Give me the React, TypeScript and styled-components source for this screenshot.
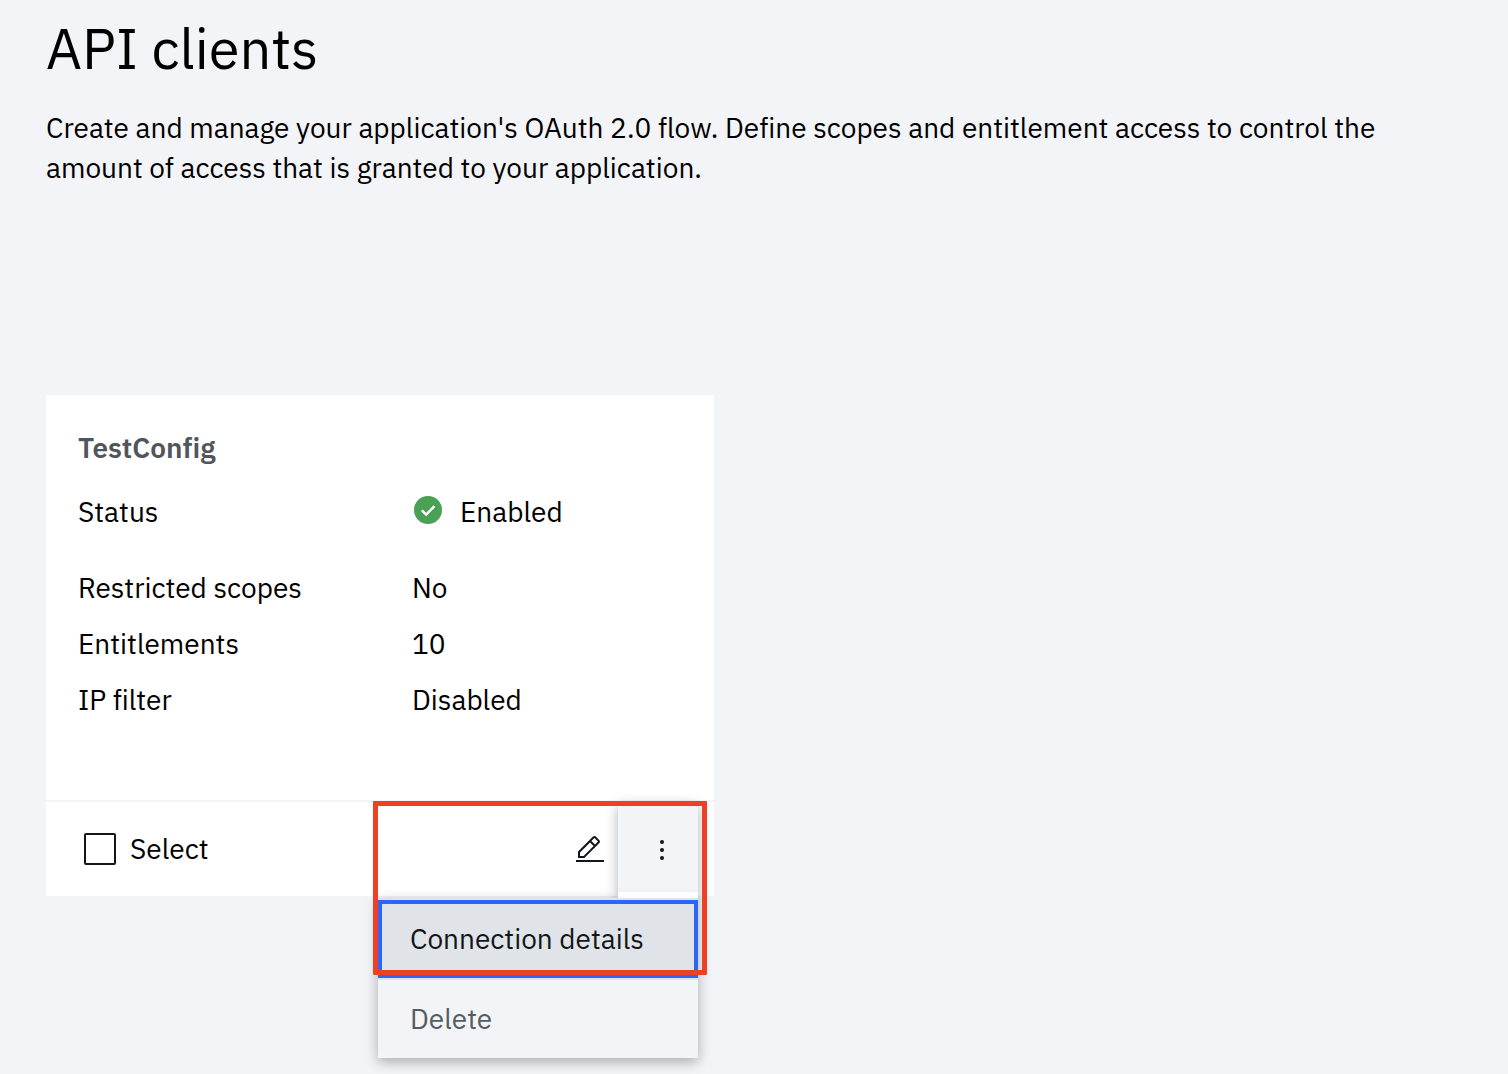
import React, { useState } from "react";
import styled, { createGlobalStyle } from "styled-components";

const color = {
  page: "#f2f4f8",
  card: "#ffffff",
  text: "#000000",
  ink: "#121619",
  heading: "#50565b",
  disabled: "#565c60",
  focus: "#2b66f6",
  selected: "#e0e3e8",
  green: "#4aa054",
  callout: "#ee4025",
};

const GlobalStyle = createGlobalStyle`
  *, *::before, *::after { box-sizing: border-box; }
  body {
    margin: 0;
    background: ${color.page};
    color: ${color.text};
    font-family: "IBM Plex Sans", Inter, "Liberation Sans", sans-serif;
    font-size: 28px;
    line-height: 40px;
    font-variant-ligatures: none;
  }
  button, input { font: inherit; color: inherit; }
`;

const Page = styled.main`
  min-height: 100vh;
  padding: 16px 46px;
`;

const Title = styled.h1`
  margin: 0;
  font-size: 56px;
  line-height: 64px;
  font-weight: 400;
`;

const Intro = styled.p`
  margin: 28px 0 0;
`;

const CardGrid = styled.section`
  display: grid;
  grid-template-columns: repeat(2, minmax(0, 1fr));
  column-gap: 80px;
  padding-top: 207px;
`;

const Card = styled.article`
  background: ${color.card};
`;

const CardBody = styled.div`
  padding: 33px 32px 72px;
`;

const CardTitle = styled.h2`
  margin: 0;
  font-size: 28px;
  line-height: 40px;
  font-weight: 600;
  color: ${color.heading};
`;

const Details = styled.dl`
  margin: 16px 0 0;
`;

const DetailRow = styled.div<{ $spaced?: boolean }>`
  display: grid;
  grid-template-columns: 334px minmax(0, 1fr);
  align-items: center;
  height: 56px;
  margin-bottom: ${(p) => (p.$spaced ? 20 : 0)}px;
`;

const Term = styled.dt`
  margin: 0;
`;

const Value = styled.dd`
  display: flex;
  align-items: center;
  gap: 18px;
  margin: 0;
`;

const StatusIcon = styled.svg`
  width: 28px;
  height: 28px;
  margin: 0 0 4px 2px;
`;

const CardFooter = styled.footer`
  display: flex;
  align-items: center;
  height: 96px;
  padding: 0 16px 0 38px;
  border-top: 2px solid ${color.page};
`;

const SelectLabel = styled.label`
  display: flex;
  align-items: center;
  gap: 14px;
  margin-right: auto;
`;

const Checkbox = styled.input`
  appearance: none;
  width: 32px;
  height: 32px;
  margin: 0;
  border: 2px solid ${color.ink};
  border-radius: 2px;
  &:checked { background: ${color.ink}; }
`;

const IconButton = styled.button`
  display: flex;
  align-items: center;
  justify-content: center;
  align-self: flex-start;
  width: 56px;
  height: 96px;
  padding: 0;
  border: 0;
  background: transparent;
  color: ${color.ink};
`;

const Overflow = styled.div`
  position: relative;
  align-self: flex-start;
`;

const OverflowButton = styled(IconButton)`
  width: 80px;
  padding-left: 8px;
  background: ${color.page};
  box-shadow: 0 4px 12px rgba(0, 0, 0, 0.3);
`;

const Icon = styled.svg`
  width: 32px;
  height: 32px;
  fill: currentColor;
`;

const Menu = styled.ul`
  position: absolute;
  top: 96px;
  right: 0;
  width: 320px;
  margin: 0;
  padding: 0;
  list-style: none;
  background: ${color.page};
  box-shadow: 0 4px 12px rgba(0, 0, 0, 0.3);

  &::before {
    content: "";
    position: absolute;
    bottom: 100%;
    right: 0;
    width: 80px;
    height: 6px;
    background: ${color.card};
  }
`;

const MenuItem = styled.li`
  border-top: 2px solid ${color.selected};
`;

const MenuButton = styled.button<{ $active?: boolean }>`
  display: block;
  width: 100%;
  height: 78px;
  padding: 0 32px;
  border: 0;
  text-align: left;
  white-space: nowrap;
  background: ${(p) => (p.$active ? color.selected : "transparent")};
  color: ${(p) => (p.$active ? color.ink : color.disabled)};
  outline: ${(p) => (p.$active ? `4px solid ${color.focus}` : "none")};
  outline-offset: -4px;
`;

const Callout = styled.div`
  position: absolute;
  top: -1px;
  right: -9px;
  width: 334px;
  height: 174px;
  border: 5px solid ${color.callout};
  border-radius: 1px;
  pointer-events: none;
`;

const details = [
  { term: "Restricted scopes", value: "No" },
  { term: "Entitlements", value: "10" },
  { term: "IP filter", value: "Disabled" },
];

export default function App() {
  const [open, setOpen] = useState(true);

  return (
    <Page>
      <GlobalStyle />
      <Title>API clients</Title>
      <Intro>
        Create and manage your application's OAuth 2.0 flow. Define scopes and
        entitlement access to control the amount of access that is granted to
        your application.
      </Intro>
      <CardGrid>
        <Card>
          <CardBody>
            <CardTitle>TestConfig</CardTitle>
            <Details>
              <DetailRow $spaced>
                <Term>Status</Term>
                <Value>
                  <StatusIcon viewBox="0 0 28 28" aria-hidden="true">
                    <circle cx="14" cy="14" r="14" fill={color.green} />
                    <path
                      d="M7.8 14.4 12.2 18.6 20.4 10.2"
                      fill="none"
                      stroke="#fff"
                      strokeWidth="2.4"
                    />
                  </StatusIcon>
                  Enabled
                </Value>
              </DetailRow>
              {details.map((d) => (
                <DetailRow key={d.term}>
                  <Term>{d.term}</Term>
                  <Value>{d.value}</Value>
                </DetailRow>
              ))}
            </Details>
          </CardBody>
          <CardFooter>
            <SelectLabel htmlFor="select-client">
              <Checkbox id="select-client" type="checkbox" />
              Select
            </SelectLabel>
            <IconButton type="button" aria-label="Edit">
              <Icon viewBox="0 0 32 32" aria-hidden="true">
                <path d="M2 26h28v2H2zM25.4 9c.8-.8.8-2 0-2.8l-3.6-3.6c-.8-.8-2-.8-2.8 0l-15 15V24h6.4l15-15zm-5-5L24 7.6l-3 3L17.4 7l3-3zM6 22v-3.6l10-10 3.6 3.6-10 10H6z" />
              </Icon>
            </IconButton>
            <Overflow>
              <OverflowButton
                type="button"
                aria-label="More actions"
                aria-expanded={open}
                onClick={() => setOpen(!open)}
              >
                <Icon viewBox="0 0 32 32" aria-hidden="true">
                  <circle cx="16" cy="8" r="2" />
                  <circle cx="16" cy="16" r="2" />
                  <circle cx="16" cy="24" r="2" />
                </Icon>
              </OverflowButton>
              {open && (
                <Menu>
                  <MenuItem>
                    <MenuButton type="button" $active>
                      Connection details
                    </MenuButton>
                  </MenuItem>
                  <MenuItem>
                    <MenuButton type="button">Delete</MenuButton>
                  </MenuItem>
                </Menu>
              )}
              <Callout />
            </Overflow>
          </CardFooter>
        </Card>
      </CardGrid>
    </Page>
  );
}
